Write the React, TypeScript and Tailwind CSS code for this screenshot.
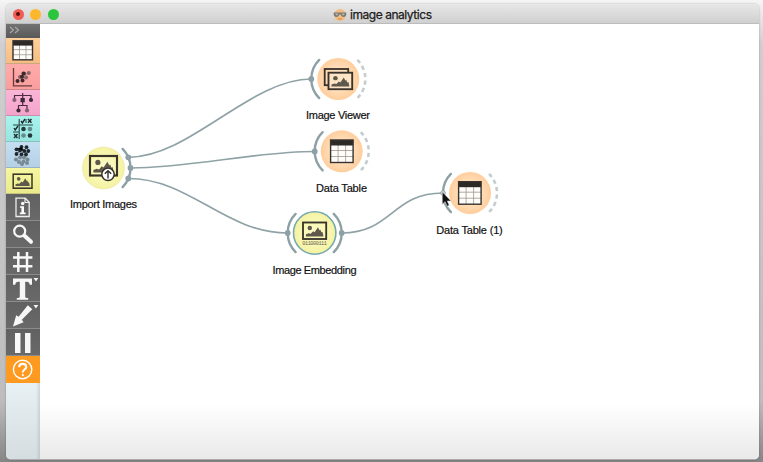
import React from 'react';

const INK = '#37322e';

function TableGlyph({ x, y, w, h }: { x: number; y: number; w: number; h: number }) {
  const head = h * 0.2;
  const lines = [1, 2].map((i) => ({
    vx: x + (w * i) / 3,
    hy: y + head + ((h - head) * i) / 3,
  }));
  return (
    <g>
      <rect x={x} y={y} width={w} height={h} fill="#fffdfa" />
      {lines.map((l, i) => (
        <g key={i} stroke="#a0958d" strokeWidth="0.8">
          <path d={`M${l.vx} ${y + head}V${y + h}`} />
          <path d={`M${x} ${l.hy}H${x + w}`} />
        </g>
      ))}
      <rect x={x} y={y} width={w} height={head + 1} fill="#2d2926" />
      <rect x={x} y={y} width={w} height={h} fill="none" stroke={INK} strokeWidth="1.4" />
    </g>
  );
}

function PictureGlyph({ x, y, w, h, fill = 'none' }: { x: number; y: number; w: number; h: number; fill?: string }) {
  return (
    <g transform={`translate(${x} ${y}) scale(${w / 24} ${h / 17})`}>
      <rect x="0" y="0" width="24" height="17" fill={fill} stroke="#38332b" strokeWidth="1.9" />
      <circle cx="7" cy="5.6" r="2.3" fill="#5f594c" />
      <path d="M3 14.3V12.2L6 11.2L8 11.7L10.5 9L12 10L15.5 5L17 8L18 7.5L19 10L20.2 9.7L21.2 14.3Z" fill="#5f594c" />
    </g>
  );
}

function ToolIcon({ name }: { name: string }) {
  switch (name) {
    case 'data':
      return <TableGlyph x={7} y={2.8} w={19.5} h={19} />;
    case 'visualize':
      return (
        <g>
          <path d="M7.5 4V21.8H26" fill="none" stroke="#6b3c3c" strokeWidth="1.3" />
          {[[14, 13], [20, 13.5], [18.5, 9.7], [22.8, 9]].map(([x, y], i) => <circle key={i} cx={x} cy={y} r="2" fill="#8a6666" />)}
          {[[11.5, 17], [16.5, 16.4], [17.5, 9.6], [16, 12.8]].map(([x, y], i) => <circle key={i} cx={x} cy={y} r="2" fill="#40272a" />)}
        </g>
      );
    case 'model':
      return (
        <g>
          <path d="M8.5 9V5.5H25V9M16.7 3V10M16.7 11V15.5M12.5 20V15.5H21V20" fill="none" stroke="#4c2d40" strokeWidth="1.2" />
          <rect x="14.5" y="8" width="4.3" height="4.3" fill="#3d2936" />
          <circle cx="8.4" cy="10" r="2.1" fill="#876075" />
          <circle cx="25" cy="10" r="2.1" fill="#3d2936" />
          <circle cx="12.5" cy="20.5" r="2.1" fill="#3d2936" />
          <circle cx="21" cy="20.5" r="2.1" fill="#876075" />
        </g>
      );
    case 'evaluate':
      return (
        <g>
          <path d="M13.2 3V23M7 9H27M20 3V7M7 16H13" fill="none" stroke="#28484a" strokeWidth="1.1" />
          <path d="M15 5L16.4 7L19 3M22 3L25.5 6.8M25.5 3L22 6.8M8 12L9.2 14L12 10M8 18L11.5 22M11.5 18L8 22" fill="none" stroke="#202b2e" strokeWidth="1.4" />
          <circle cx="17.5" cy="13" r="2.3" fill="#24373a" />
          <circle cx="24" cy="13" r="2.3" fill="#648b8d" />
          <circle cx="17.5" cy="19.5" r="2.3" fill="#648b8d" />
          <circle cx="24" cy="19.5" r="2.3" fill="#24373a" />
        </g>
      );
    case 'unsupervised':
      return (
        <g>
          {[[10, 17.5], [14, 15.5], [18, 15.5], [21.5, 17.5], [13, 20], [17.5, 19.5], [21, 21], [16, 22]].map(([x, y], i) => (
            <circle key={i} cx={x} cy={y} r="2" fill="#788a94" />
          ))}
          {[[10.5, 7.3], [15.5, 4.8], [20.5, 5.2], [22.3, 9], [18.4, 9], [14, 8.6], [10.5, 12], [15.5, 12.3], [20, 12.5]].map(([x, y], i) => (
            <circle key={i} cx={x} cy={y} r="1.9" fill="#20282d" />
          ))}
          <path d="M10 7L18 9L15.5 5M14 9L10 12M18 9L16 12M22 9L20 12" stroke="#20282d" strokeWidth=".8" />
        </g>
      );
    case 'images':
      return <PictureGlyph x={7.2} y={6.2} w={18.8} h={14} />;
    case 'info':
      return (
        <g>
          <path d="M10 4.2H19.2L23.2 8.2V22.5H10Z" fill="none" stroke="#eee" strokeWidth="1.3" />
          <path d="M19 4V8.5H23.5" fill="none" stroke="#eee" strokeWidth="1.2" />
          <circle cx="16.7" cy="9.5" r="1.7" fill="#fff" />
          <path d="M14 12.2H18V18.5H19.6V20.2H13.8V18.5H15.4V13.7H14Z" fill="#fff" />
        </g>
      );
    case 'zoom':
      return (
        <g fill="none" stroke="#f7f7f7">
          <circle cx="13.7" cy="10.2" r="5.5" strokeWidth="2.2" />
          <path d="M18.5 14.8L25 20.8" strokeWidth="4" strokeLinecap="round" />
        </g>
      );
    case 'grid':
      return <path d="M12.3 4V24M21 4V24M7 9.5H26.4M7 18.3H26.4" fill="none" stroke="#f7f7f7" strokeWidth="2.5" />;
    case 'text':
      return (
        <g fill="#f7f7f7">
          <path d="M7 3.6H26V9.7H23.7C23.4 7.5 22.6 6.7 20.8 6.7H19.2V21.5C19.2 22.5 20 23 22.2 23V24.8H10.8V23C13 23 13.8 22.5 13.8 21.5V6.7H12.2C10.4 6.7 9.6 7.5 9.3 9.7H7Z" />
          <path d="M27.5 3H32.3L29.9 6.6Z" />
        </g>
      );
    case 'arrow':
      return (
        <g fill="#f7f7f7">
          <path d="M21.8 3.2L26.3 7.3L15.8 17.8L17.6 20.3L7 24.6L10.2 13.2L12.6 14.8Z" />
          <path d="M27.5 3H32.3L29.9 6.6Z" />
        </g>
      );
    case 'pause':
      return <path d="M9 4H14.5V24H9ZM19 4H24.5V24H19Z" fill="#f7f7f7" />;
    default:
      return (
        <g fill="none" stroke="#fff">
          <circle cx="16.6" cy="13.5" r="9.2" strokeWidth="1.4" />
          <path d="M13.2 11.2C13.2 9 14.7 7.9 16.7 7.9C18.8 7.9 20.2 9.1 20.2 10.9C20.2 13.6 16.8 13.4 16.8 16.4" strokeWidth="2.1" />
          <circle cx="16.8" cy="19" r=".7" fill="#fff" strokeWidth="1" />
        </g>
      );
  }
}

const CATEGORIES = [
  { name: 'data', bg: 'bg-[linear-gradient(#ffd09b,#f6bd83)]' },
  { name: 'visualize', bg: 'bg-[linear-gradient(#ffabab,#fb9d9d)]' },
  { name: 'model', bg: 'bg-[linear-gradient(#fab5d7,#f4a4cb)]' },
  { name: 'evaluate', bg: 'bg-[linear-gradient(#a9f3ed,#98e5df)]' },
  { name: 'unsupervised', bg: 'bg-[linear-gradient(#c5dff2,#b3d0e5)]' },
  { name: 'images', bg: 'bg-[linear-gradient(#f7f7a1,#eaea8c)]' },
];

const TOOLS = ['info', 'zoom', 'grid', 'text', 'arrow', 'pause'];

function Sidebar() {
  return (
    <div className="flex w-[34px] shrink-0 flex-col bg-[linear-gradient(90deg,transparent_30px,rgba(120,140,140,0.25)),linear-gradient(#e8f1f4_82%,#d5dde0)]">
      <div className="h-[14px] bg-[linear-gradient(#727272,#595959)]">
        <svg className="block h-[14px] w-[34px]">
          <path d="M4 3L7.5 6L4 9M9 3L12.5 6L9 9" fill="none" stroke="#aaa" strokeWidth="1.1" />
        </svg>
      </div>
      {CATEGORIES.map((c) => (
        <div key={c.name} className={`h-[26px] border-b border-black/20 ${c.bg}`}>
          <svg className="block h-[25px] w-[34px]"><ToolIcon name={c.name} /></svg>
        </div>
      ))}
      {TOOLS.map((t) => (
        <div key={t} className="h-[27px] border-b border-[#8b8b8b] bg-[linear-gradient(#616161,#696969)]">
          <svg className="block h-[26px] w-[34px]"><ToolIcon name={t} /></svg>
        </div>
      ))}
      <div className="h-[27px] bg-[#ff9a20]">
        <svg className="block h-[27px] w-[34px]"><ToolIcon name="help" /></svg>
      </div>
    </div>
  );
}

function Arc({ x, y, side, dashed }: { x: number; y: number; side: 1 | -1; dashed?: boolean }) {
  return (
    <path
      d={`M${x + side * 19.1} ${y - 19.1}A27 27 0 0 ${side === 1 ? 1 : 0} ${x + side * 19.1} ${y + 19.1}`}
      fill="none"
      stroke={dashed ? '#c3cccf' : '#8da0a6'}
      strokeWidth={dashed ? 2.6 : 2.4}
      strokeLinecap={dashed ? 'butt' : 'round'}
      strokeDasharray={dashed ? '4.2 3.35' : undefined}
    />
  );
}

function Label({ x, y, width, children }: { x: number; y: number; width: number; children: string }) {
  return (
    <text x={x} y={y} textLength={width} textAnchor="middle" fontSize="11" fill="#111" stroke="#111" strokeWidth="0.2" fontFamily="'Liberation Sans', Arial, sans-serif">
      {children}
    </text>
  );
}

function Workflow() {
  return (
    <svg viewBox="40 24 719 435" className="block h-[435px] w-[719px]">
      <defs>
        <radialGradient id="peach">
          <stop offset="0" stopColor="#ffe7cb" />
          <stop offset=".55" stopColor="#ffdeb9" />
          <stop offset="1" stopColor="#ffcd9c" />
        </radialGradient>
        <radialGradient id="lemon">
          <stop offset="0" stopColor="#fbfac8" />
          <stop offset=".55" stopColor="#f9f8b6" />
          <stop offset="1" stopColor="#f4f2a0" />
        </radialGradient>
      </defs>

      <g fill="none" stroke="#8fa2a6" strokeWidth="1.7">
        <path d="M128.3 157.3C190 157.3 250 79 311.3 79" />
        <path d="M130.5 168C190 168 255 151.5 314.7 151.5" />
        <path d="M128.3 178.5C190 178.5 225 233 287.7 233" />
        <path d="M341.7 233C392 233 392 193 443 193" />
      </g>

      <circle cx="103.5" cy="168" r="21" fill="url(#lemon)" stroke="#e9e6aa" strokeWidth=".6" />
      <PictureGlyph x={90} y={156} w={27} h={19.5} />
      <circle cx="108" cy="174.3" r="6.2" fill="#fff" stroke="#332f28" strokeWidth="1.4" />
      <path d="M108 178.5V171.5M104.8 173.8L108 170.7L111.2 173.8" fill="none" stroke="#332f28" strokeWidth="1.4" />
      <Arc x={103.5} y={168} side={1} />
      <Label x={103.5} y={208} width={67}>Import Images</Label>

      <circle cx="338.3" cy="79" r="21" fill="url(#peach)" />
      <rect x="324.7" y="69" width="23.5" height="16.2" fill="none" stroke="#38302a" strokeWidth="1.8" />
      <PictureGlyph x={328.5} y={72.7} w={23.7} h={16.5} fill="#ffe4c6" />
      <Arc x={338.3} y={79} side={-1} />
      <Arc x={338.3} y={79} side={1} dashed />
      <Label x={338} y={119} width={64}>Image Viewer</Label>

      <circle cx="341.7" cy="151.3" r="21" fill="url(#peach)" />
      <TableGlyph x={330.6} y={140} w={22.5} h={22.5} />
      <Arc x={341.7} y={151.3} side={-1} />
      <Arc x={341.7} y={151.3} side={1} dashed />
      <Label x={341.5} y={192} width={51}>Data Table</Label>

      <circle cx="314.7" cy="233" r="21.2" fill="url(#lemon)" stroke="#76a9b1" strokeWidth="1.6" />
      <PictureGlyph x={303} y={222.5} w={23.2} h={16.5} />
      <text x="314.6" y="245.2" textAnchor="middle" textLength="24.5" fontSize="5.2" fill="#68634d" fontFamily="'Liberation Mono', monospace">011000111</text>
      <Arc x={314.7} y={233} side={-1} />
      <Arc x={314.7} y={233} side={1} />
      <Label x={314.5} y={273.5} width={84}>Image Embedding</Label>

      <circle cx="470" cy="193" r="21" fill="url(#peach)" />
      <TableGlyph x={458.6} y={181.7} w={22.5} h={22.5} />
      <Arc x={470} y={193} side={-1} />
      <Arc x={470} y={193} side={1} dashed />
      <Label x={469.5} y={233.5} width={66.5}>Data Table (1)</Label>

      <g fill="#8da0a6">
        <circle cx="128.3" cy="157.3" r="2.9" />
        <circle cx="130.5" cy="168" r="2.9" />
        <circle cx="128.3" cy="178.5" r="2.9" />
        <circle cx="311.3" cy="79" r="2.9" />
        <circle cx="314.7" cy="151.5" r="2.9" />
        <circle cx="287.7" cy="233" r="2.9" />
        <circle cx="341.7" cy="233" r="2.9" />
      </g>
      <circle cx="443" cy="193" r="2.3" fill="#dce3e4" stroke="#8da0a6" />
      <path d="M442.3 191.8V204.3L445.1 201.7L447.1 206.2L449.2 205.2L447.3 201H451Z" fill="#111" stroke="#d5d5d5" strokeWidth=".6" />
    </svg>
  );
}

function TitleBar() {
  return (
    <div className="grid h-5 grid-cols-[1fr_auto_1fr] items-center border-b border-[#bcbcbc] bg-[linear-gradient(#e7e7e7,#d0d0d0)]">
      <div className="flex gap-[6.5px] pt-px pl-[6.5px]">
        <span className="flex size-[11px] items-center justify-center rounded-full bg-[#f05b56]">
          <span className="size-1 rounded-full bg-[#560d0b]" />
        </span>
        <span className="size-[11px] rounded-full bg-[#fdb72c]" />
        <span className="size-[11px] rounded-full bg-[#2bc53d]" />
      </div>
      <div className="flex items-center gap-[3px] pt-0.5">
        <svg className="h-[14px] w-[14px]" viewBox="0 0 14 14">
          <circle cx="7" cy="7" r="6" fill="#f4bd82" />
          <path d="M.7 4.5H13.3V6.5C13 9.8 8.2 9.8 7.7 6.5H6.3C5.8 9.8 1 9.8 .7 6.5Z" fill="#797974" />
          <path d="M2.2 5.6H5.3C5.2 8 2.5 8 2.2 5.6ZM8.7 5.6H11.8C11.5 8 8.8 8 8.7 5.6Z" fill="#b3b7ae" />
          <path d="M5 10.7Q7 11.7 9 10.7" fill="none" stroke="#b46f49" strokeWidth=".7" />
        </svg>
        <svg className="h-4 w-[83px]">
          <text x="0" y="12" textLength="82" fontSize="12" fill="#202020" stroke="#202020" strokeWidth=".25" fontFamily="Inter, 'Liberation Sans', sans-serif">image analytics</text>
        </svg>
      </div>
      <div />
    </div>
  );
}

export default function App() {
  return (
    <div className="h-[462px] w-[763px] overflow-hidden bg-[linear-gradient(#f5f5f5,#cfcfcf_45px,#bdbdbd_400px,#858585)] pt-1 pl-[6px]">
      <div className="flex h-[456px] w-[753px] flex-col overflow-hidden rounded-[5px] border-b border-[#aaa] bg-white shadow-[0_0_2px_rgba(0,0,0,0.3)]">
        <TitleBar />
        <div className="flex min-h-0 flex-1">
          <Sidebar />
          <div className="min-w-0 flex-1 bg-[linear-gradient(#fff_380px,#e9e9e9)]">
            <Workflow />
          </div>
        </div>
      </div>
    </div>
  );
}
